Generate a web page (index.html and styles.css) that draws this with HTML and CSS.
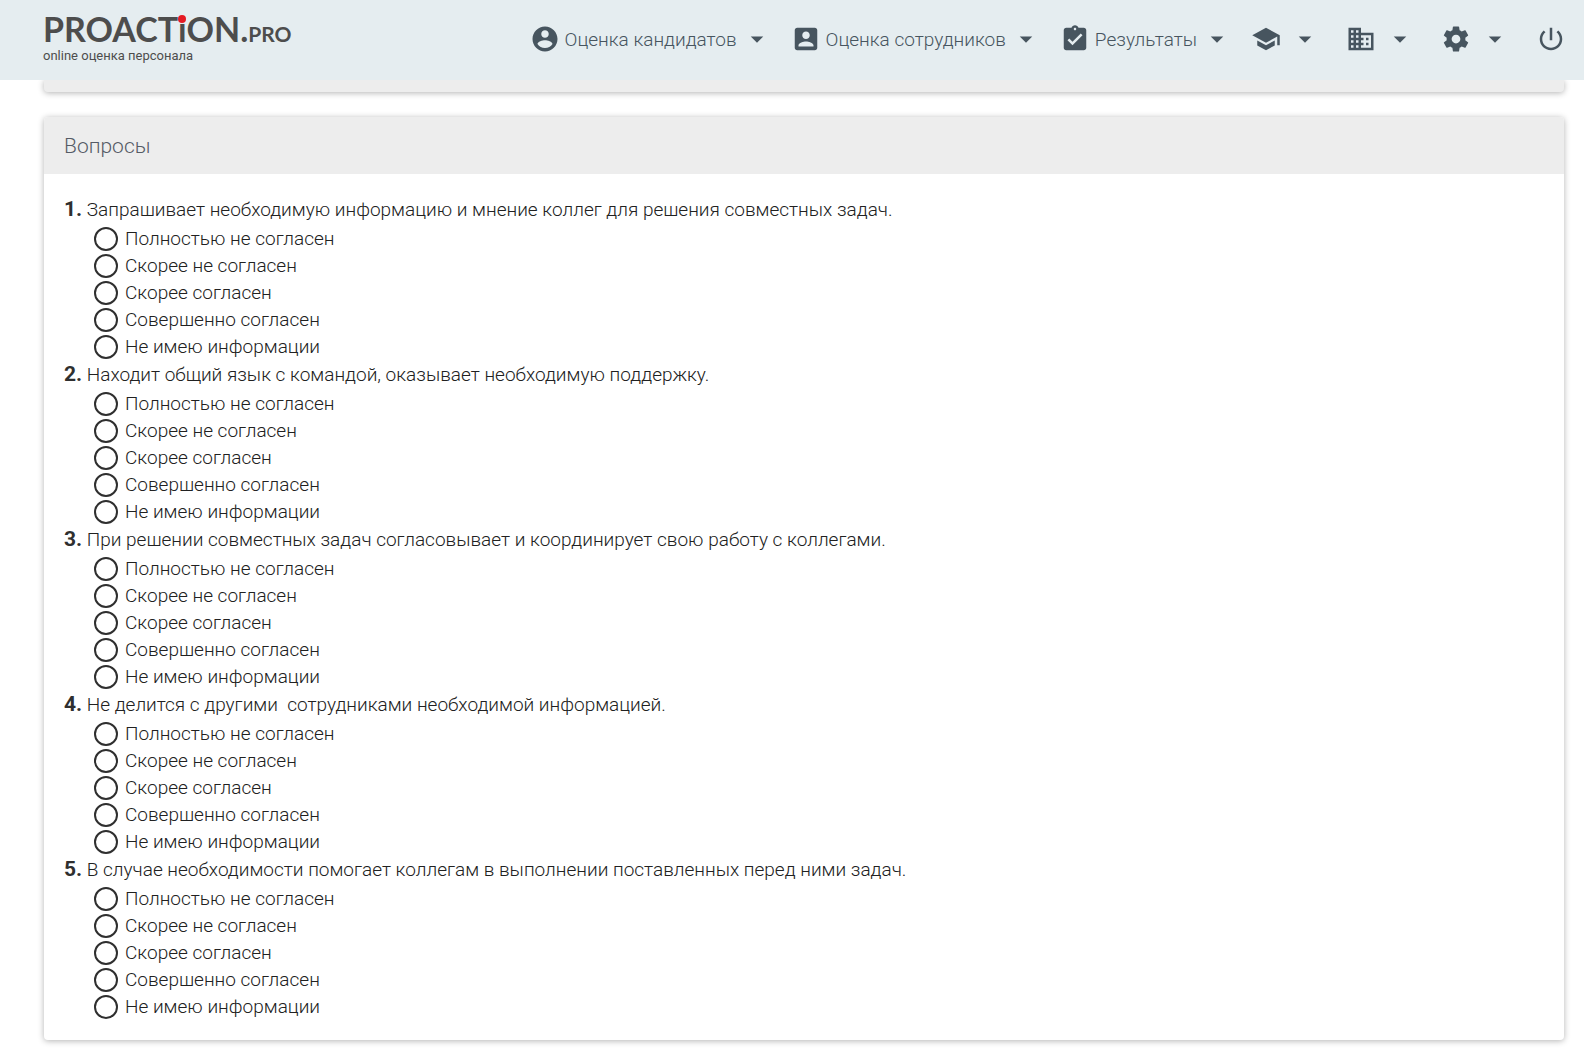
FILE: index.html
```html
<!DOCTYPE html>
<html lang="ru">
<head>
<meta charset="utf-8">
<meta name="viewport" content="width=device-width, initial-scale=1">
<title>Proaction.pro</title>
<link rel="stylesheet" href="styles.css">
</head>
<body>
<header class="topbar">
  <a class="logo" href="#">
    <span class="logo-name">PROACT<span class="logo-i">ı</span>ON.<span class="logo-suffix">PRO</span></span>
    <span class="logo-tagline">online оценка персонала</span>
  </a>
  <nav class="nav">
    <button class="nav-item" type="button">
      <svg class="icon" viewBox="0 0 24 24"><path d="M12 2C6.48 2 2 6.48 2 12s4.480 10 10 10 10-4.480 10-10S17.520 2 12 2zm0 3c1.660 0 3 1.340 3 3s-1.340 3-3 3-3-1.340-3-3 1.340-3 3-3zm0 14.200c-2.500 0-4.710-1.280-6-3.220.03-1.990 4-3.080 6-3.080 1.990 0 5.970 1.090 6 3.080-1.290 1.940-3.500 3.220-6 3.220z"/></svg>
      <span class="nav-label">Оценка кандидатов</span>
      <svg class="icon" viewBox="0 0 24 24"><path d="M7 10l5 5 5-5z"/></svg>
    </button>
    <button class="nav-item" type="button">
      <svg class="icon" viewBox="0 0 24 24"><path d="M3 5v14c0 1.100.89 2 2 2h14c1.100 0 2-.9 2-2V5c0-1.100-.9-2-2-2H5c-1.110 0-2 .9-2 2zm12 4c0 1.660-1.340 3-3 3s-3-1.340-3-3 1.340-3 3-3 3 1.340 3 3zm-9 8c0-2 4-3.100 6-3.100s6 1.100 6 3.100v1H6v-1z"/></svg>
      <span class="nav-label">Оценка сотрудников</span>
      <svg class="icon" viewBox="0 0 24 24"><path d="M7 10l5 5 5-5z"/></svg>
    </button>
    <button class="nav-item" type="button">
      <svg class="icon" viewBox="0 0 24 24"><path d="M19 3h-4.180C14.400 1.840 13.300 1 12 1c-1.300 0-2.400.84-2.820 2H5c-1.100 0-2 .9-2 2v14c0 1.100.9 2 2 2h14c1.100 0 2-.9 2-2V5c0-1.100-.9-2-2-2zm-7 0c.55 0 1 .45 1 1s-.45 1-1 1-1-.45-1-1 .45-1 1-1zm-2 14l-4-4 1.410-1.410L10 14.170l6.590-6.590L18 9l-8 8z"/></svg>
      <span class="nav-label">Результаты</span>
      <svg class="icon" viewBox="0 0 24 24"><path d="M7 10l5 5 5-5z"/></svg>
    </button>
    <button class="nav-item nav-item-compact" type="button" aria-label="Обучение">
      <svg class="icon" viewBox="0 0 24 24"><path d="M5 13.180v4L12 21l7-3.820v-4L12 17l-7-3.820zM12 3L1 9l11 6 9-4.910V17h2V9L12 3z"/></svg>
      <svg class="icon" viewBox="0 0 24 24"><path d="M7 10l5 5 5-5z"/></svg>
    </button>
    <button class="nav-item nav-item-compact" type="button" aria-label="Компания">
      <svg class="icon" viewBox="0 0 24 24"><path d="M12 7V3H2v18h20V7H12zM6 19H4v-2h2v2zm0-4H4v-2h2v2zm0-4H4V9h2v2zm0-4H4V5h2v2zm4 12H8v-2h2v2zm0-4H8v-2h2v2zm0-4H8V9h2v2zm0-4H8V5h2v2zm10 12h-8v-2h2v-2h-2v-2h2v-2h-2V9h8v10zm-2-8h-2v2h2v-2zm0 4h-2v2h2v-2z"/></svg>
      <svg class="icon" viewBox="0 0 24 24"><path d="M7 10l5 5 5-5z"/></svg>
    </button>
    <button class="nav-item nav-item-compact" type="button" aria-label="Настройки">
      <svg class="icon" viewBox="0 0 24 24"><path d="M19.430 12.980c.04-.32.07-.64.07-.98s-.03-.66-.07-.98l2.110-1.650c.19-.15.24-.42.12-.64l-2-3.460c-.12-.22-.39-.3-.61-.22l-2.490 1c-.52-.4-1.080-.73-1.690-.98l-.38-2.650C14.460 2.180 14.250 2 14 2h-4c-.25 0-.46.18-.49.42l-.38 2.650c-.61.25-1.170.59-1.690.98l-2.490-1c-.23-.09-.49 0-.61.22l-2 3.460c-.13.22-.07.49.12.64l2.110 1.650c-.04.32-.07.65-.07.98s.03.66.07.98l-2.110 1.650c-.19.15-.24.42-.12.64l2 3.460c.12.22.39.3.61.22l2.490-1c.52.4 1.080.73 1.690.98l.38 2.650c.03.24.24.42.49.42h4c.25 0 .46-.18.49-.42l.38-2.650c.61-.25 1.170-.59 1.690-.98l2.490 1c.23.09.49 0 .61-.22l2-3.460c.12-.22.07-.49-.12-.64l-2.110-1.650zM12 15.500c-1.930 0-3.500-1.570-3.500-3.500s1.570-3.500 3.500-3.500 3.500 1.570 3.500 3.500-1.570 3.500-3.500 3.500z"/></svg>
      <svg class="icon" viewBox="0 0 24 24"><path d="M7 10l5 5 5-5z"/></svg>
    </button>
    <button class="nav-item nav-item-compact" type="button" aria-label="Выход">
      <svg class="icon" viewBox="0 0 24 24"><path d="M13 3h-2v10h2V3zm4.830 2.170l-1.420 1.420C17.990 7.860 19 9.810 19 12c0 3.870-3.130 7-7 7s-7-3.130-7-7c0-2.190 1.010-4.140 2.580-5.420L6.170 5.170C4.230 6.820 3 9.260 3 12c0 4.970 4.030 9 9 9s9-4.030 9-9c0-2.740-1.230-5.180-3.170-6.830z"/></svg>
    </button>
  </nav>
</header>
<main class="page">
  <div class="card card-tail"></div>
  <form class="card">
    <h1 class="card-title">Вопросы</h1>
    <div class="questions">
      <fieldset class="question">
        <legend class="question-text"><b class="number">1.</b> Запрашивает необходимую информацию и мнение коллег для решения совместных задач.</legend>
        <label class="option"><input class="radio" type="radio" name="q1">Полностью не согласен</label>
        <label class="option"><input class="radio" type="radio" name="q1">Скорее не согласен</label>
        <label class="option"><input class="radio" type="radio" name="q1">Скорее согласен</label>
        <label class="option"><input class="radio" type="radio" name="q1">Совершенно согласен</label>
        <label class="option"><input class="radio" type="radio" name="q1">Не имею информации</label>
      </fieldset>
      <fieldset class="question">
        <legend class="question-text"><b class="number">2.</b> Находит общий язык с командой, оказывает необходимую поддержку.</legend>
        <label class="option"><input class="radio" type="radio" name="q2">Полностью не согласен</label>
        <label class="option"><input class="radio" type="radio" name="q2">Скорее не согласен</label>
        <label class="option"><input class="radio" type="radio" name="q2">Скорее согласен</label>
        <label class="option"><input class="radio" type="radio" name="q2">Совершенно согласен</label>
        <label class="option"><input class="radio" type="radio" name="q2">Не имею информации</label>
      </fieldset>
      <fieldset class="question">
        <legend class="question-text"><b class="number">3.</b> При решении совместных задач согласовывает и координирует свою работу с коллегами.</legend>
        <label class="option"><input class="radio" type="radio" name="q3">Полностью не согласен</label>
        <label class="option"><input class="radio" type="radio" name="q3">Скорее не согласен</label>
        <label class="option"><input class="radio" type="radio" name="q3">Скорее согласен</label>
        <label class="option"><input class="radio" type="radio" name="q3">Совершенно согласен</label>
        <label class="option"><input class="radio" type="radio" name="q3">Не имею информации</label>
      </fieldset>
      <fieldset class="question">
        <legend class="question-text"><b class="number">4.</b> Не делится с другими&nbsp; сотрудниками необходимой информацией.</legend>
        <label class="option"><input class="radio" type="radio" name="q4">Полностью не согласен</label>
        <label class="option"><input class="radio" type="radio" name="q4">Скорее не согласен</label>
        <label class="option"><input class="radio" type="radio" name="q4">Скорее согласен</label>
        <label class="option"><input class="radio" type="radio" name="q4">Совершенно согласен</label>
        <label class="option"><input class="radio" type="radio" name="q4">Не имею информации</label>
      </fieldset>
      <fieldset class="question">
        <legend class="question-text"><b class="number">5.</b> В случае необходимости помогает коллегам в выполнении поставленных перед ними задач.</legend>
        <label class="option"><input class="radio" type="radio" name="q5">Полностью не согласен</label>
        <label class="option"><input class="radio" type="radio" name="q5">Скорее не согласен</label>
        <label class="option"><input class="radio" type="radio" name="q5">Скорее согласен</label>
        <label class="option"><input class="radio" type="radio" name="q5">Совершенно согласен</label>
        <label class="option"><input class="radio" type="radio" name="q5">Не имею информации</label>
      </fieldset>
    </div>
  </form>
</main>
</body>
</html>
```
FILE: styles.css
```css
* {
  box-sizing: border-box;
}

body {
  margin: 0;
  background: #fff;
  color: #212121;
  font-family: Roboto, "Liberation Sans", sans-serif;
  font-size: 19px;
  font-weight: 300;
}

.topbar {
  position: sticky;
  top: 0;
  z-index: 1;
  display: flex;
  align-items: center;
  justify-content: space-between;
  height: 80px;
  padding: 0 18px 2px 43px;
  background: #e5edf0;
}

.logo {
  display: flex;
  flex-direction: column;
  color: #4d4d4d;
  text-decoration: none;
}

.logo-name {
  font: 700 34px/28px Lato, sans-serif;
}

.logo-i {
  position: relative;
}

.logo-i::before {
  content: "";
  position: absolute;
  top: 7px;
  left: 50%;
  width: 8px;
  height: 8px;
  margin-left: -4px;
  border-radius: 50%;
  background: #e51b23;
}

.logo-suffix {
  font-size: 21px;
}

.logo-tagline {
  font: 400 13px/16px Roboto, sans-serif;
}

.nav {
  display: flex;
  align-items: center;
  gap: 19px;
}

.nav-item {
  display: flex;
  align-items: center;
  gap: 5px;
  padding: 0;
  border: 0;
  background: none;
  color: #47555f;
  font: inherit;
  cursor: pointer;
}

.nav-item-compact {
  gap: 9px;
}

.nav-item-compact + .nav-item-compact {
  margin-left: 7px;
}

.icon {
  width: 30px;
  height: 30px;
  fill: currentColor;
}

.page {
  padding: 0 20px 14px 44px;
}

.card {
  border-radius: 4px;
  background: #fff;
  box-shadow: 0 1px 6px rgba(0, 0, 0, 0.3);
}

.card-tail {
  height: 12px;
  margin-bottom: 25px;
  border-radius: 0 0 4px 4px;
  background: #ededed;
}

.card-title {
  margin: 0;
  padding: 2px 20px 0;
  border-radius: 4px 4px 0 0;
  background: #ededed;
  color: #555b66;
  font-size: 21px;
  font-weight: 300;
  line-height: 55px;
}

.questions {
  padding: 21px 20px 20px;
}

.question {
  margin: 0;
  padding: 0;
  border: 0;
}

.question-text {
  padding: 0;
  line-height: 30px;
}

.number {
  color: #2f2f2f;
  font-size: 21px;
  font-weight: 700;
  line-height: 1;
}

.option {
  display: flex;
  align-items: center;
  gap: 7px;
  height: 27px;
  padding-left: 30px;
}

.radio {
  appearance: none;
  width: 24px;
  height: 24px;
  margin: 0;
  border: 2px solid #2f2f2f;
  border-radius: 50%;
  background: #fff;
}

.radio:checked {
  background: radial-gradient(#2f2f2f 5px, #fff 6px);
}
```
